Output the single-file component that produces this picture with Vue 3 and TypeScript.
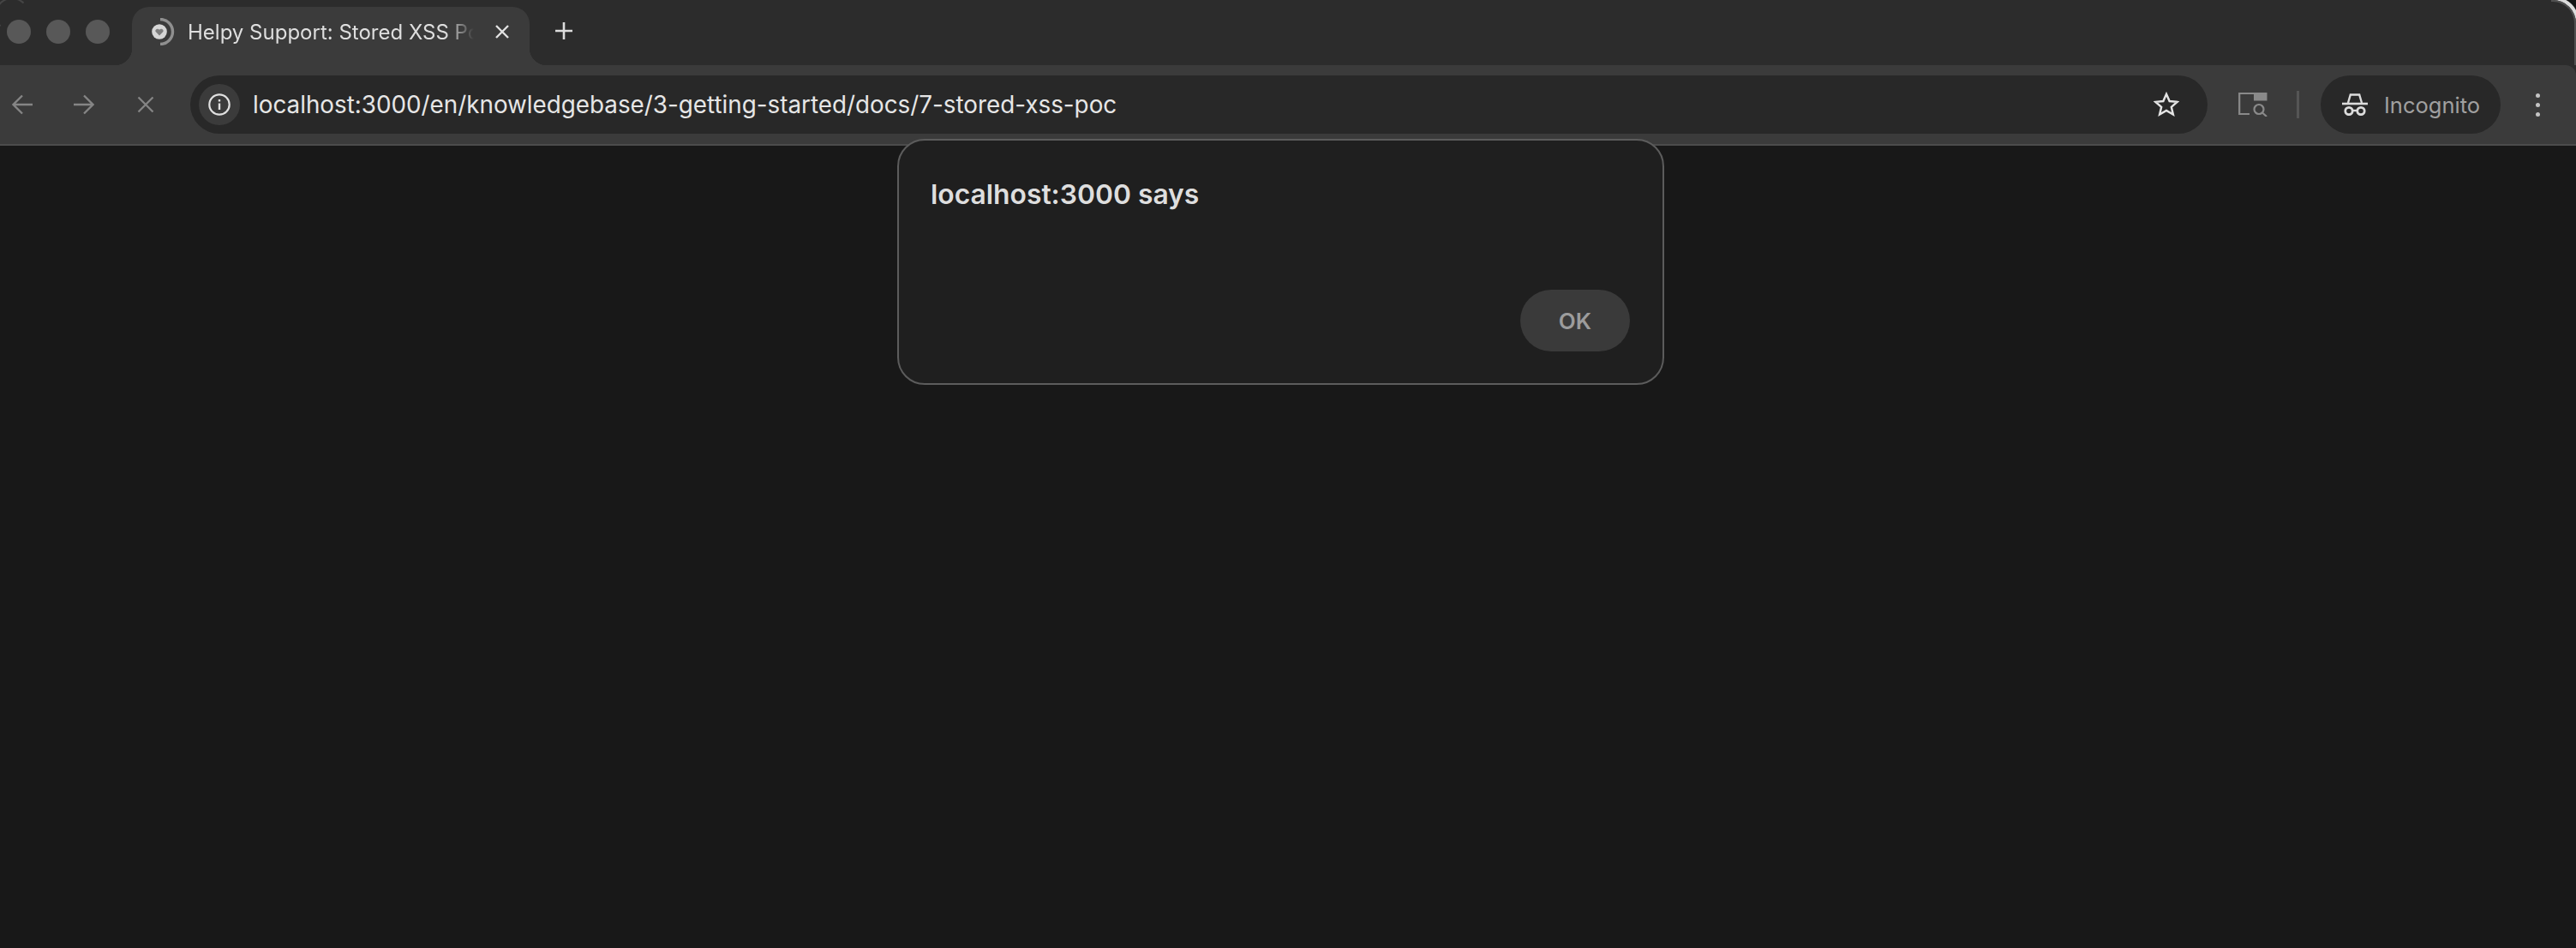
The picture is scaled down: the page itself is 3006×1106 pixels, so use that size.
<template>
  <div class="window">
    <div class="tabstrip">
      <div class="lights">
        <span class="light"></span>
        <span class="light"></span>
        <span class="light"></span>
      </div>
      <div class="tab">
        <svg class="favicon" width="28" height="32" viewBox="0 0 28 32" fill="none">
          <path d="M11 1.500a14.500 14.500 0 0 1 0 29" stroke="#8f8f8f" stroke-width="3.400" />
          <circle cx="10" cy="16" r="8.800" fill="#d6d6d6" />
          <path d="M10 20.500l-4.300-4.500c-1.400-2.300 2.400-4.700 4.300-2.300 1.900-2.400 5.700 0 4.300 2.300z" fill="#7d7d7d" />
        </svg>
        <span class="tab-title">Helpy Support: Stored XSS PoC</span>
        <svg class="tab-close" width="16" height="16" viewBox="0 0 16 16" fill="none">
          <path d="M1 1l14 14M15 1L1 15" stroke="#e2e2e2" stroke-width="2.400" />
        </svg>
      </div>
      <svg class="new-tab" width="20" height="20" viewBox="0 0 20 20" fill="none">
        <path d="M10 0v20M0 10h20" stroke="#dcdcdc" stroke-width="2.600" />
      </svg>
    </div>

    <div class="toolbar">
      <svg class="back" width="24" height="24" viewBox="0 0 24 24" fill="none">
        <path d="M24 12H2M12 1.500L1.500 12 12 22.500" stroke="#858585" stroke-width="2.300" />
      </svg>
      <svg class="forward" width="24" height="24" viewBox="0 0 24 24" fill="none">
        <path d="M0 12h22M12 1.500L22.500 12 12 22.500" stroke="#858585" stroke-width="2.300" />
      </svg>
      <svg class="stop" width="20" height="20" viewBox="0 0 20 20" fill="none">
        <path d="M1.500 1.500l17 17M18.500 1.500l-17 17" stroke="#858585" stroke-width="2.300" />
      </svg>

      <div class="omnibox">
        <div class="site-info">
          <svg width="26" height="26" viewBox="0 0 26 26" fill="none">
            <circle cx="13" cy="13" r="11.700" stroke="#e0e0e0" stroke-width="2.200" />
            <path d="M13 11.500v7.500M13 7v2.400" stroke="#e0e0e0" stroke-width="2.400" />
          </svg>
        </div>
        <span class="url">localhost:3000/en/knowledgebase/3-getting-started/docs/7-stored-xss-poc</span>
        <svg class="star" width="30" height="30" viewBox="0 0 32 32" fill="none">
          <path d="M16 3l3.900 8.800 9.500.9-7.200 6.300 2.200 9.300-8.400-5-8.400 5 2.200-9.300-7.200-6.300 9.500-.9z" stroke="#e4e4e4" stroke-width="2.600" />
        </svg>
      </div>

      <svg class="side-search" width="34" height="28" viewBox="0 0 34 28" fill="none">
        <path d="M33 1H1.200v24H13" stroke="#8a8a8a" stroke-width="2.200" />
        <path d="M18 0h15.500v9.500H18z" fill="#8a8a8a" />
        <circle cx="24" cy="19.500" r="5.500" stroke="#8a8a8a" stroke-width="2.200" />
        <path d="M28 23.500l5 4.500" stroke="#8a8a8a" stroke-width="2.200" />
      </svg>
      <span class="divider"></span>

      <div class="incognito">
        <svg width="30" height="26" viewBox="0 0 30 26" fill="none">
          <path d="M7 11l2.800-9.500h10.400L23 11" stroke="#dcdcdc" stroke-width="2.400" />
          <path d="M0 12h30" stroke="#dcdcdc" stroke-width="2.600" />
          <circle cx="8" cy="20.500" r="4.200" stroke="#dcdcdc" stroke-width="2.800" />
          <circle cx="22" cy="20.500" r="4.200" stroke="#dcdcdc" stroke-width="2.800" />
          <path d="M12 20h6" stroke="#dcdcdc" stroke-width="2.400" />
        </svg>
        <span>Incognito</span>
      </div>

      <div class="kebab">
        <span></span>
        <span></span>
        <span></span>
      </div>
    </div>

    <div class="page"></div>

    <div class="dialog">
      <div class="dialog-title">localhost:3000 says</div>
      <div class="dialog-actions">
        <button class="ok">OK</button>
      </div>
    </div>
  </div>
</template>

<script setup lang="ts">
</script>

<style>
html,
body {
  margin: 0;
  background: #181818;
}
</style>

<style scoped>
.window {
  position: relative;
  width: 3006px;
  height: 1106px;
  display: flex;
  flex-direction: column;
  overflow: hidden;
  background: linear-gradient(#2c2c2c 0 90px, #181818 90px);
  font-family: Inter, "Liberation Sans", sans-serif;
}

/* the desktop showing behind the rounded window corner */
.window::after {
  content: "";
  position: absolute;
  top: 0;
  right: 0;
  width: 14px;
  height: 14px;
  background: #141414;
}

/* faint edge of the window's other corner, cropped by the screenshot */
.window::before {
  content: "";
  position: absolute;
  z-index: 2;
  left: -6px;
  top: -3px;
  width: 40px;
  height: 40px;
  box-sizing: border-box;
  border: 2px solid #454545;
  border-color: #454545 transparent transparent #454545;
  border-radius: 50%;
}

.tabstrip {
  position: relative;
  z-index: 1;
  height: 76px;
  flex-shrink: 0;
  display: flex;
  background: #2c2c2c;
  padding-left: 8px;
  box-sizing: border-box;
  border-top-right-radius: 27px;
}

.tabstrip::after {
  content: "";
  position: absolute;
  top: 0;
  right: 0;
  width: 29px;
  height: 76px;
  box-sizing: border-box;
  border-top: 2px solid #505050;
  border-right: 2px solid #505050;
  border-top-right-radius: 27px;
  box-shadow: 3px -3px 0 #dcdcdc;
}

.lights {
  display: flex;
  align-items: center;
  gap: 18px;
  width: 146px;
  height: 74px;
  flex-shrink: 0;
}

.light {
  width: 28px;
  height: 28px;
  border-radius: 50%;
  background: #585858;
}

.tab {
  position: relative;
  width: 464px;
  margin-top: 8px;
  display: flex;
  align-items: center;
  padding: 0 24px 10px 22px;
  box-sizing: border-box;
  background: #3b3b3b;
  border-radius: 20px 20px 0 0;
}

.tab::before,
.tab::after {
  content: "";
  position: absolute;
  bottom: 0;
  width: 20px;
  height: 20px;
}

.tab::before {
  left: -20px;
  background: radial-gradient(circle at 0 0, #2c2c2c 20px, #3b3b3b 20.500px);
}

.tab::after {
  right: -20px;
  background: radial-gradient(circle at 100% 0, #2c2c2c 20px, #3b3b3b 20.500px);
}

.favicon {
  flex-shrink: 0;
  margin-right: 15px;
}

.tab-title {
  width: 334px;
  overflow: hidden;
  white-space: nowrap;
  font-size: 24px;
  color: #dedede;
  -webkit-mask-image: linear-gradient(to right, #000 90%, transparent 100%);
  mask-image: linear-gradient(to right, #000 90%, transparent 100%);
}

.tab-close {
  margin-left: auto;
  flex-shrink: 0;
}

.new-tab {
  align-self: center;
  margin: 0 0 4px 30px;
}

.toolbar {
  position: relative;
  height: 94px;
  flex-shrink: 0;
  display: flex;
  align-items: center;
  box-sizing: border-box;
  padding-left: 14px;
  background: #3b3b3b;
  border-bottom: 2px solid #4c4c4c;
  border-top-right-radius: 12px;
}

.back,
.forward,
.stop,
.side-search,
.site-info,
.incognito {
  flex-shrink: 0;
}

.forward {
  margin-left: 48px;
}

.stop {
  margin-left: 50px;
}

.omnibox {
  width: 2354px;
  height: 68px;
  margin-left: 42px;
  display: flex;
  align-items: center;
  padding: 0 33px 0 10px;
  box-sizing: border-box;
  background: #282828;
  border-radius: 34px;
  flex-shrink: 0;
}

.site-info {
  width: 48px;
  height: 48px;
  display: flex;
  align-items: center;
  justify-content: center;
  border-radius: 50%;
  background: #3b3b3b;
}

.url {
  margin-left: 15px;
  font-size: 27.800px;
  color: #e6e6e6;
  white-space: nowrap;
}

.star {
  margin-left: auto;
}

.side-search {
  margin-left: 36px;
}

.divider {
  width: 3px;
  height: 32px;
  background: #555555;
  margin-left: 34px;
  flex-shrink: 0;
}

.incognito {
  width: 210px;
  height: 68px;
  margin-left: 25px;
  display: flex;
  align-items: center;
  gap: 19px;
  padding-left: 25px;
  box-sizing: border-box;
  border-radius: 34px;
  background: #282828;
  color: #a0a0a0;
  font-size: 25.500px;
}

.kebab {
  display: flex;
  flex-direction: column;
  gap: 6px;
  margin-left: 41px;
  flex-shrink: 0;
}

.kebab span {
  width: 5px;
  height: 5px;
  border-radius: 50%;
  background: #c4c4c4;
}

.page {
  flex: 1;
  background: #181818;
}

.dialog {
  position: absolute;
  z-index: 3;
  left: 1047px;
  top: 162px;
  width: 895px;
  height: 287px;
  box-sizing: border-box;
  padding: 0 38px 37px 37px;
  display: flex;
  flex-direction: column;
  background: #1f1f1f;
  border: 2px solid #5c5c5c;
  border-radius: 32px;
}

.dialog-title {
  margin-top: 44px;
  font-size: 31.800px;
  font-weight: 600;
  line-height: 38px;
  color: #dedede;
}

.dialog-actions {
  margin-top: auto;
  display: flex;
  justify-content: flex-end;
}

.ok {
  width: 128px;
  height: 72px;
  border: none;
  border-radius: 36px;
  background: #3a3a3a;
  color: #9c9c9c;
  font-family: inherit;
  font-size: 26px;
  font-weight: 600;
}
</style>
